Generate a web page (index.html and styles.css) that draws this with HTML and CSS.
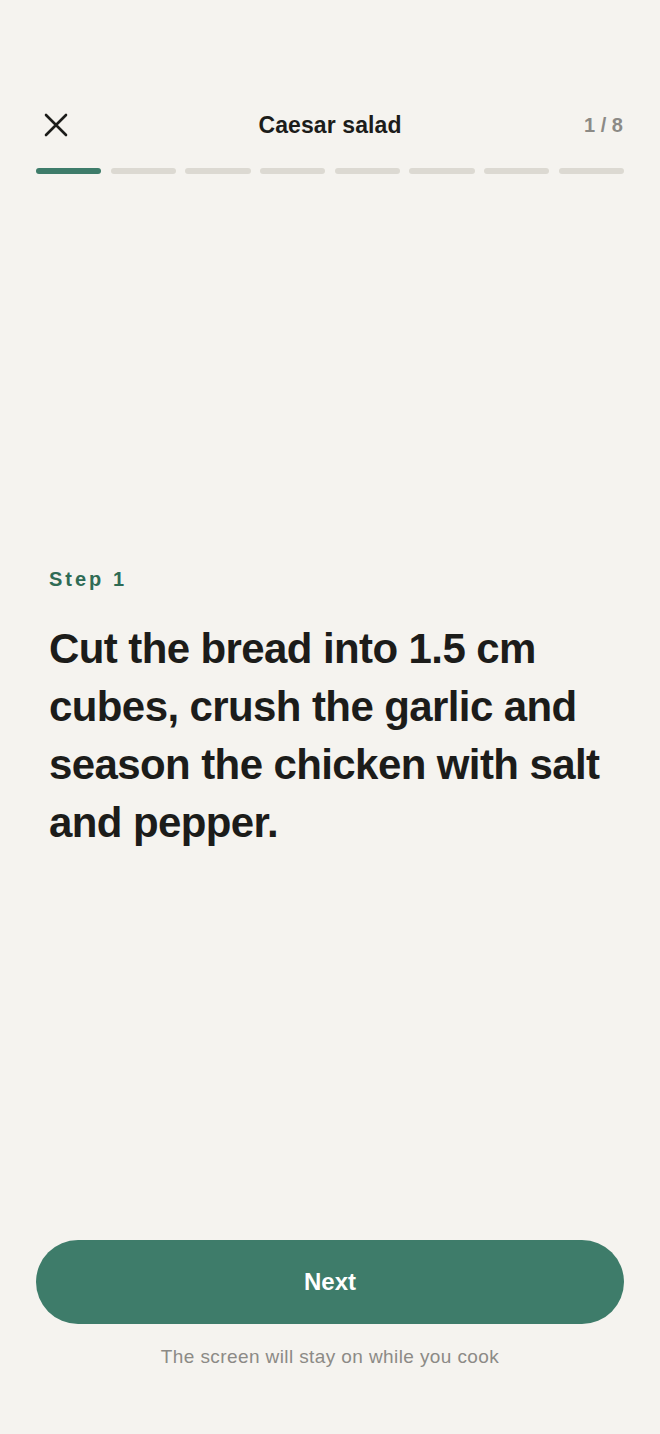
FILE: index.html
```html
<!DOCTYPE html>
<html lang="en">
<head>
<meta charset="utf-8">
<title>Caesar salad – Step 1</title>
<link rel="stylesheet" href="styles.css">
</head>
<body>
<div class="screen">
  <header class="header">
    <button class="close" aria-label="Close">
      <svg viewBox="0 0 24 24" width="24" height="24"><path d="M2 2 L22 22 M22 2 L2 22" stroke="#1c1c1a" stroke-width="2.6" stroke-linecap="round" fill="none"/></svg>
    </button>
    <h1 class="title">Caesar salad</h1>
    <span class="count">1 / 8</span>
  </header>
  <div class="progress">
    <span class="seg active"></span>
    <span class="seg"></span>
    <span class="seg"></span>
    <span class="seg"></span>
    <span class="seg"></span>
    <span class="seg"></span>
    <span class="seg"></span>
    <span class="seg"></span>
  </div>
  <main class="main">
    <div class="step">
      <div class="step-label">Step 1</div>
      <p class="step-text">Cut the bread into 1.5 cm cubes, crush the garlic and season the chicken with salt and pepper.</p>
    </div>
  </main>
  <footer class="footer">
    <button class="next">Next</button>
    <p class="caption">The screen will stay on while you cook</p>
  </footer>
</div>
</body>
</html>
```
FILE: styles.css
```css
* { box-sizing: border-box; }
html, body {
  margin: 0;
  padding: 0;
  background: #f5f3ef;
}
body {
  font-family: "Liberation Sans", Arial, sans-serif;
  color: #1c1c1a;
}
.screen {
  height: 1434px;
  display: flex;
  flex-direction: column;
  padding: 108px 36px 65px;
}
.header {
  height: 34px;
  display: grid;
  grid-template-columns: 1fr auto 1fr;
  align-items: center;
}
.close {
  justify-self: start;
  background: none;
  border: 0;
  padding: 0;
  margin-left: 8px;
  width: 24px;
  height: 24px;
  display: flex;
}
.title {
  margin: 0;
  font-size: 23px;
  font-weight: 700;
  letter-spacing: 0.1px;
}
.count {
  justify-self: end;
  margin-right: 1px;
  font-size: 20px;
  font-weight: 700;
  color: #8c8a86;
}
.progress {
  margin-top: 26px;
  display: flex;
  gap: 9.5px;
}
.seg {
  flex: 1;
  height: 6px;
  border-radius: 3px;
  background: #dcd9d2;
}
.seg.active { background: #3e7c6a; }
.main {
  flex: 1;
  display: flex;
  flex-direction: column;
  justify-content: center;
  padding: 5px 13px 0 13px;
}
.step-label {
  color: #2f6b55;
  font-size: 20px;
  font-weight: 700;
  letter-spacing: 3px;
  line-height: 24px;
}
.step-text {
  margin: 29px 0 0;
  font-size: 42px;
  font-weight: 700;
  line-height: 58px;
  letter-spacing: -0.6px;
}
.footer {
  display: flex;
  flex-direction: column;
  align-items: stretch;
}
.next {
  height: 84px;
  border: 0;
  border-radius: 42px;
  background: #3e7c6a;
  color: #ffffff;
  font-family: inherit;
  font-size: 24px;
  font-weight: 700;
}
.caption {
  margin: 21px 0 0;
  text-align: center;
  font-size: 19px;
  letter-spacing: 0.4px;
  line-height: 24px;
  color: #8c8a86;
}
```
